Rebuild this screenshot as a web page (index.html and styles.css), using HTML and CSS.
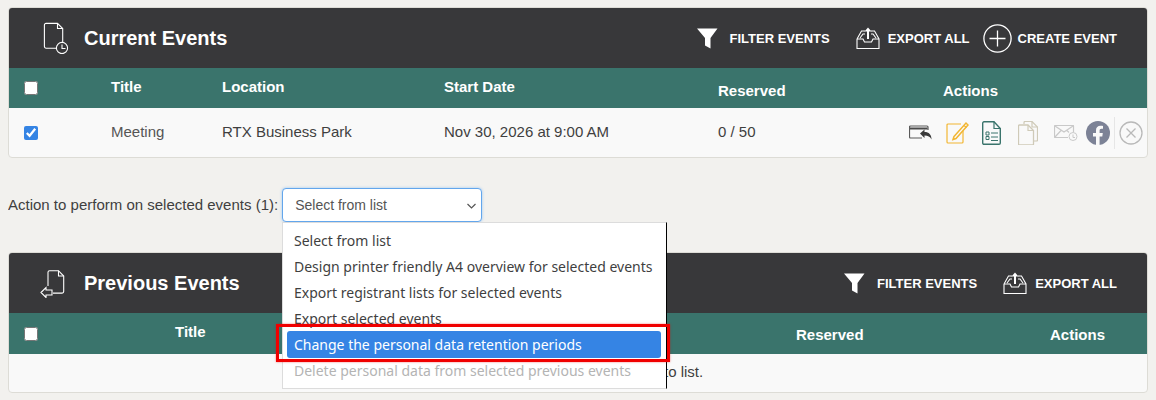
FILE: index.html
```html
<!DOCTYPE html>
<html lang="en">
<head>
  <meta charset="UTF-8">
  <title>Events</title>
  <link rel="stylesheet" href="styles.css">
</head>
<body>
  <section class="card">
    <header class="card__head">
      <svg class="head-icon" width="28" height="32" viewBox="0 0 28 32" fill="none" stroke="#fff" stroke-width="1.100">
        <path d="M14 26.200H4A1.600 1.600 0 0 1 2.400 24.600V3A1.600 1.600 0 0 1 4 1.400H15.500L20.700 6.500V20"/>
        <path d="M15.500 1.400V6.500H20.700"/>
        <circle cx="20" cy="26" r="5.600"/>
        <path d="M20 22.500V26.500H23.500"/>
      </svg>
      <h2 class="card__title">Current Events</h2>
      <div class="tools">
        <a class="tool tool--filter">
          <svg width="21" height="21" viewBox="0 0 21 21"><path d="M0 0.500H20.500L13.500 10V20.500L8 17.500V10Z" fill="#fff"/></svg>
          FILTER EVENTS
        </a>
        <a class="tool tool--export">
          <svg width="24" height="23" viewBox="0 0 24 23" fill="none" stroke="#fff" stroke-width="1.100"><path d="M1 12V21.500H23V12L18.500 4H15M9 4H5.500L1 12"/><path d="M1 12H7L8.500 15H15.500L17 12H23M4 11L7 7H9M15 7H17L20 11"/><path d="M12 12V3" stroke-width="2"/><path d="M8.500 4.500L12 0.500L15.500 4.500Z" fill="#fff" stroke="none"/></svg>
          EXPORT ALL
        </a>
        <a class="tool tool--create">
          <svg width="29" height="29" viewBox="0 0 29 29" fill="none" stroke="#fff" stroke-width="1.300"><circle cx="14.500" cy="14.500" r="13.600"/><path d="M14.500 6.500V22.500M6.500 14.500H22.500"/></svg>
          CREATE EVENT
        </a>
      </div>
    </header>
    <table class="events events--current">
      <colgroup><col class="c-check"><col class="c-title"><col class="c-loc"><col class="c-date"><col class="c-res"><col></colgroup>
      <thead>
        <tr>
          <th class="check"><input type="checkbox"></th>
          <th class="high">Title</th>
          <th class="high">Location</th>
          <th class="high">Start Date</th>
          <th>Reserved</th>
          <th class="actions-head">Actions</th>
        </tr>
      </thead>
      <tbody>
        <tr>
          <td class="check"><input type="checkbox" checked></td>
          <td class="muted">Meeting</td>
          <td>RTX Business Park</td>
          <td>Nov 30, 2026 at 9:00 AM</td>
          <td>0 / 50</td>
          <td class="actions-cell">
            <div class="row-actions">
              <svg class="ico-move" width="23" height="15" viewBox="0 0 23 15" fill="none"><path d="M13 13H1.500a1 1 0 0 1-1-1V2a1 1 0 0 1 1-1H18a1 1 0 0 1 1 1V5" stroke="#5a5a5a" stroke-width="1.200"/><path d="M1 3.500H18.500" stroke="#4a4a4a" stroke-width="2"/><path d="M11 8.500L15.500 4.500V7C20 7 22.500 9.500 22.500 14.500C21 11.500 19 10.500 15.500 10.500V13Z" fill="#3a3a3a"/></svg>
              <svg class="ico-edit" width="23" height="23" viewBox="0 0 23 23" fill="none" stroke="#f2b632" stroke-width="1.200"><path d="M15 3H2a1 1 0 0 0-1 1V21a1 1 0 0 0 1 1H16a1 1 0 0 0 1-1V10"/><path d="M8 15.500L20 2L22 4L10 17.500L7 18.500Z" stroke-width="1.500"/><path d="M18 4.500L20.500 6.500"/></svg>
              <svg class="ico-list" width="20" height="24" viewBox="0 0 20 24" fill="none" stroke="#3a746c" stroke-width="1.200"><path d="M12 0.800H2a1.300 1.300 0 0 0-1.300 1.300V22a1.300 1.300 0 0 0 1.300 1.300H17a1.300 1.300 0 0 0 1.300-1.300V7.500Z" stroke-width="1.400"/><path d="M12 0.800V7.500H18.300"/><path d="M4 11H7V14H4ZM4 15.500H7V18.500H4ZM9 12H16M9 16H16M9 19.500H16" stroke-width="1"/></svg>
              <svg class="ico-copy" width="20" height="24" viewBox="0 0 20 24" fill="none" stroke="#cfcab8" stroke-width="1.200"><path d="M6 3V1.500a1 1 0 0 1 1-1H14L19.500 6V19a1 1 0 0 1-1 1H15.500"/><path d="M14 .500V6H19.500"/><path d="M10 4H1.500a1 1 0 0 0-1 1V23a1 1 0 0 0 1 1H14.500a1 1 0 0 0 1-1V9.500Z" stroke-width="1.300"/><path d="M10 4V9.500H15.500"/></svg>
              <svg class="ico-mail" width="24" height="16" viewBox="0 0 24 16" fill="none" stroke="#c9c9c9" stroke-width="1.200"><path d="M14 12.500H1a.5.500 0 0 1-.5-.5V1A.5.500 0 0 1 1 .500H19a.5.500 0 0 1 .5.500V7"/><path d="M1 1L10 7L19 1M1 12L7 5.500M13 5.500L15 7.500"/><circle cx="19" cy="11.500" r="4" stroke-width="1"/><path d="M19 9.500V12.500H21" stroke-width="1"/></svg>
              <svg class="ico-fb" width="24" height="24" viewBox="0 0 24 24"><circle cx="12" cy="12" r="12" fill="#7c8296"/><path d="M10 24V15.500H7V12H10V9.300C10 6.300 11.800 4.700 14.500 4.700C15.800 4.700 17 4.900 17 4.900V7.800H15.500C14 7.800 13.600 8.700 13.600 9.600V12H16.800L16.300 15.500H13.600V24Z" fill="#f9f9f9"/></svg>
              <span class="sep"></span>
              <svg width="24" height="24" viewBox="0 0 24 24" fill="none" stroke="#b9b9b9" stroke-width="1.300"><circle cx="12" cy="12" r="11"/><path d="M7.500 7.500L16.500 16.500M16.500 7.500L7.500 16.500"/></svg>
            </div>
          </td>
        </tr>
      </tbody>
    </table>
  </section>

  <form class="action-bar">
    <label class="action-label" for="action">Action to perform on selected events (1):</label>
    <div class="select-wrap">
      <select id="action" class="action-select">
        <option>Select from list</option>
      </select>
      <svg class="chevron" width="9" height="6" viewBox="0 0 9 6" fill="none" stroke="#555" stroke-width="1.200"><path d="M.5 1L4.500 5L8.500 1"/></svg>
    </div>
    <ul class="popup">
      <li>Select from list</li>
      <li>Design printer friendly A4 overview for selected events</li>
      <li>Export registrant lists for selected events</li>
      <li>Export selected events</li>
      <li class="is-active">Change the personal data retention periods</li>
      <li class="is-off">Delete personal data from selected previous events</li>
    </ul>
    <div class="callout"></div>
  </form>

  <section class="card">
    <header class="card__head">
      <svg class="head-icon head-icon--prev" width="30" height="30" viewBox="0 0 30 30" fill="none" stroke="#fff" stroke-width="1.100">
        <path d="M8 18V4.300A1.600 1.600 0 0 1 9.600 2.700H18.500L23.700 8V23.500A1.600 1.600 0 0 1 22.100 25.100H13"/>
        <path d="M18.500 2.700V8H23.700"/>
        <path d="M1 24.500L6 19.500V22H12V27H6V29.500Z"/>
      </svg>
      <h2 class="card__title">Previous Events</h2>
      <div class="tools">
        <a class="tool tool--filter">
          <svg width="21" height="21" viewBox="0 0 21 21"><path d="M0 0.500H20.500L13.500 10V20.500L8 17.500V10Z" fill="#fff"/></svg>
          FILTER EVENTS
        </a>
        <a class="tool tool--export">
          <svg width="24" height="23" viewBox="0 0 24 23" fill="none" stroke="#fff" stroke-width="1.100"><path d="M1 12V21.500H23V12L18.500 4H15M9 4H5.500L1 12"/><path d="M1 12H7L8.500 15H15.500L17 12H23M4 11L7 7H9M15 7H17L20 11"/><path d="M12 12V3" stroke-width="2"/><path d="M8.500 4.500L12 0.500L15.500 4.500Z" fill="#fff" stroke="none"/></svg>
          EXPORT ALL
        </a>
      </div>
    </header>
    <table class="events events--previous">
      <colgroup><col class="p-check"><col class="p-title"><col class="p-res"><col></colgroup>
      <thead>
        <tr>
          <th class="check"><input type="checkbox"></th>
          <th class="high">Title</th>
          <th>Reserved</th>
          <th>Actions</th>
        </tr>
      </thead>
      <tbody>
        <tr>
          <td class="empty" colspan="4">to list.</td>
        </tr>
      </tbody>
    </table>
  </section>
</body>
</html>
```

FILE: styles.css
```css
* {
  box-sizing: border-box;
}

body {
  margin: 7px 8px 0;
  background: #f2f1ee;
  font-family: "Liberation Sans", Arial, sans-serif;
  font-size: 15px;
  color: #3f3f3f;
  overflow: hidden;
}

/* Cards */

.card {
  border: 1px solid #dddcd6;
  border-radius: 4px;
  background: #f9f9f9;
  overflow: hidden;
}

.card__head {
  display: flex;
  align-items: center;
  height: 60px;
  padding: 0 30px 0 33px;
  background: #38383a;
  color: #fff;
}

.head-icon {
  flex: none;
  margin-right: 14px;
}

.head-icon--prev {
  margin-left: -2px;
}

.card__title {
  margin: 0;
  font-size: 20px;
  font-weight: bold;
}

.tools {
  display: flex;
  align-items: center;
  margin-left: auto;
}

.tool {
  display: flex;
  align-items: center;
  font-size: 13px;
  font-weight: bold;
  white-space: nowrap;
}

.tool svg {
  flex: none;
}

.tool--filter svg {
  margin-right: 12px;
}

.tool--export {
  margin-left: 26px;
}

.tool--export svg {
  margin-right: 8px;
}

.tool--create {
  margin-left: 13px;
}

.tool--create svg {
  margin-right: 6px;
}

/* Tables */

.events {
  width: 100%;
  border-collapse: collapse;
  table-layout: fixed;
}

.events th {
  height: 40px;
  padding: 4px 0 0;
  background: #3a746c;
  color: #fff;
  font-size: 15px;
  font-weight: bold;
  text-align: left;
}

.events th.high {
  padding: 0 0 3px;
}

.events td {
  height: 49px;
  padding: 0 0 2px;
}

.events th.check,
.events td.check {
  padding: 0 0 0 15px;
}

.events td.actions-cell {
  padding: 0;
}

.events td.muted {
  color: #555;
}

.events input {
  display: block;
  width: 14px;
  height: 14px;
  margin: 0;
  accent-color: #3584e4;
}

.c-check { width: 102px; }
.c-title { width: 111px; }
.c-loc { width: 222px; }
.c-date { width: 274px; }
.c-res { width: 182px; }

.p-check { width: 166px; }
.p-title { width: 621px; }
.p-res { width: 254px; }

.events--previous th {
  height: 41px;
  padding-top: 2px;
}

.events--previous th.high {
  padding-bottom: 5px;
}

.events--previous td {
  height: 38px;
}

.actions-head {
  padding-left: 43px !important;
}

.row-actions {
  display: flex;
  align-items: center;
  height: 32px;
  padding-left: 9px;
}

.row-actions svg {
  flex: none;
}

.ico-edit { margin-left: 14px; }
.ico-list { margin-left: 13px; }
.ico-copy { margin-left: 16px; }
.ico-mail { margin-left: 16px; }
.ico-fb { margin-left: 8px; }

.sep {
  flex: none;
  width: 1px;
  height: 32px;
  margin: 0 4px;
  background: #e6e6e6;
}

.events td.empty {
  padding: 0 0 3px 655px;
  text-align: left;
}

/* Action picker */

.action-bar {
  position: relative;
  display: flex;
  align-items: center;
  gap: 4px;
  height: 34px;
  margin: 30px 0;
}

.action-label {
  padding-bottom: 2px;
}

.select-wrap {
  position: relative;
  width: 200px;
  height: 34px;
}

.action-select {
  width: 100%;
  height: 100%;
  padding: 0 8px 0 12px;
  border: 1px solid #63a6ec;
  border-radius: 4px;
  outline: 0;
  background: #fff;
  box-shadow: 0 0 3px #9cc6f1;
  font-family: "Liberation Sans", Arial, sans-serif;
  font-size: 14px;
  color: #555;
  appearance: none;
}

.chevron {
  position: absolute;
  top: 15px;
  right: 6px;
  pointer-events: none;
}

.popup {
  position: absolute;
  top: 34px;
  left: 274px;
  z-index: 5;
  width: 385px;
  margin: 0;
  padding: 5px 5px 4px;
  border: 1px solid #dcdcdc;
  border-right: 1px solid #000;
  background: #fff;
  font-family: "Noto Sans", sans-serif;
  font-size: 14px;
  list-style: none;
}

.popup li {
  height: 26px;
  padding: 0 6px;
  border-radius: 3px;
  line-height: 26px;
  white-space: nowrap;
}

.popup .is-active {
  height: 27px;
  margin: -1px 0 0 -1px;
  padding-left: 7px;
  background: #3584e4;
  line-height: 28px;
  color: #fff;
}

.popup .is-off {
  color: #b4b4b4;
}

.callout {
  position: absolute;
  top: 136px;
  left: 268px;
  z-index: 6;
  width: 394px;
  height: 38px;
  border: 3px solid #f00000;
  box-shadow: 0 0 2px rgba(240, 0, 0, .5);
}
```
